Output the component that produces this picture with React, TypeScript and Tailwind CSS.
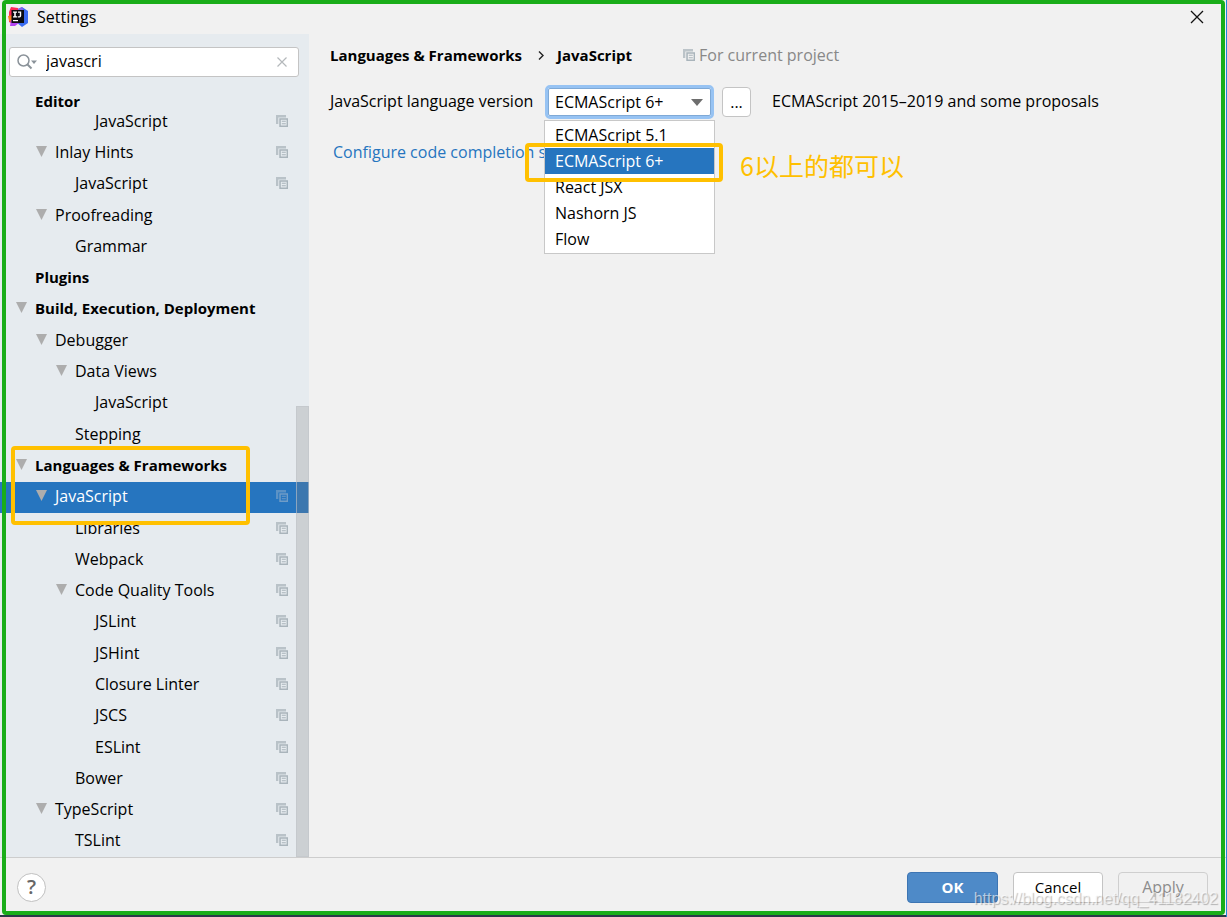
import React, { useState } from 'react';

interface TreeItem {
  id: string;
  label: string;
  level: number;
  open?: boolean;
  bold?: boolean;
  perProject?: boolean;
}

const treeItems: TreeItem[] = [
  { id: 'editor-js', label: 'JavaScript', level: 3, perProject: true },
  { id: 'inlay', label: 'Inlay Hints', level: 1, open: true, perProject: true },
  { id: 'inlay-js', label: 'JavaScript', level: 2, perProject: true },
  { id: 'proofreading', label: 'Proofreading', level: 1, open: true },
  { id: 'grammar', label: 'Grammar', level: 2 },
  { id: 'plugins', label: 'Plugins', level: 0, bold: true },
  { id: 'build', label: 'Build, Execution, Deployment', level: 0, open: true, bold: true },
  { id: 'debugger', label: 'Debugger', level: 1, open: true },
  { id: 'data-views', label: 'Data Views', level: 2, open: true },
  { id: 'data-views-js', label: 'JavaScript', level: 3 },
  { id: 'stepping', label: 'Stepping', level: 2 },
  { id: 'languages', label: 'Languages & Frameworks', level: 0, open: true, bold: true },
  { id: 'javascript', label: 'JavaScript', level: 1, open: true, perProject: true },
  { id: 'libraries', label: 'Libraries', level: 2, perProject: true },
  { id: 'webpack', label: 'Webpack', level: 2, perProject: true },
  { id: 'quality', label: 'Code Quality Tools', level: 2, open: true, perProject: true },
  { id: 'jslint', label: 'JSLint', level: 3, perProject: true },
  { id: 'jshint', label: 'JSHint', level: 3, perProject: true },
  { id: 'closure', label: 'Closure Linter', level: 3, perProject: true },
  { id: 'jscs', label: 'JSCS', level: 3, perProject: true },
  { id: 'eslint', label: 'ESLint', level: 3, perProject: true },
  { id: 'bower', label: 'Bower', level: 2, perProject: true },
  { id: 'typescript', label: 'TypeScript', level: 1, open: true, perProject: true },
  { id: 'tslint', label: 'TSLint', level: 2, perProject: true },
];

const versions = ['ECMAScript 5.1', 'ECMAScript 6+', 'React JSX', 'Nashorn JS', 'Flow'];

const levelPadding = ['pl-[15px]', 'pl-[35px]', 'pl-[55px]', 'pl-[75px]'];

const ProjectIcon = ({ className = 'text-[#a9b4bb]' }: { className?: string }) => (
  <svg width="12" height="12" viewBox="0 0 12 12" className={`shrink-0 ${className}`}>
    <path d="M0 0h10v2.500H2.300V9H0z" fill="currentColor" opacity=".75" />
    <path fillRule="evenodd" d="M3.300 3.300H12V12H3.300zM4.800 4.800v5.800h5.800V4.800z" fill="currentColor" />
    <path d="M5.800 5.800h4v1h-4zM5.800 8.200h4v1h-4z" fill="currentColor" />
  </svg>
);

const Logo = () => (
  <svg width="20" height="20" viewBox="0 0 20 20" className="shrink-0">
    <path d="M1 5 3 0l7 1 3 9-8 7-4-2z" fill="#fe2857" />
    <path d="M0 9l5-1v7l-4-1z" fill="#fc801d" />
    <path d="M10 2l4-2 6 4v12l-6 4-6-5z" fill="#3b6cf0" />
    <path d="M10 2l4-2 2 4h-6z" fill="#8a63e8" />
    <path d="M2 19l1-6 8 3-4 3z" fill="#b345f1" />
    <path d="M3.500 3h12.500v13H3.500z" fill="#0b0b0f" />
    <path d="M5 4.500h4v1.200H7.800v3.600H9v1.200H5V9.300h1.200V5.700H5zM10 4.500h3.200v4.300q0 1.700-1.700 1.700H9.700V9.300h1.500q.6 0 .6-.7V5.700H10z" fill="#fff" />
    <path d="M5 13h5v1.200H5z" fill="#fff" />
  </svg>
);

function App() {
  const [query, setQuery] = useState('javascri');
  const [selected, setSelected] = useState('javascript');
  const [version, setVersion] = useState('ECMAScript 6+');

  return (
    <div className="relative flex min-h-screen flex-col overflow-hidden bg-[#f1f1f1] font-['Open_Sans','Noto_Sans_CJK_SC',sans-serif] text-[16px] leading-5 text-black">
      <header className="flex h-[34px] items-center gap-[9px] pr-[23px] pl-2">
        <Logo />
        <h1 className="flex-1 text-[16px]">Settings</h1>
        <button type="button" aria-label="Close" className="p-0">
          <svg width="14" height="14" viewBox="0 0 14 14" fill="none" stroke="#111" strokeWidth="1.300">
            <path d="M1 1l12 12M13 1L1 13" />
          </svg>
        </button>
      </header>

      <div className="flex flex-1">
        <aside className="flex w-[309px] shrink-0 flex-col bg-[#e6ebef]">
          <div className="mx-[9px] mt-[13px] mr-[10px] flex h-[30px] items-center rounded-[3px] border border-[#c4c4c4] bg-white pr-[10px] pl-[7px]">
            <svg width="21" height="16" viewBox="0 0 21 16" fill="none" stroke="#8a9299" strokeWidth="1.500" className="shrink-0">
              <circle cx="6.500" cy="6.500" r="5.500" />
              <path d="M10.500 10.500l4 4" strokeWidth="2" />
              <path d="M14 6.500h6l-3 3.500z" fill="#8a9299" stroke="none" />
            </svg>
            <input
              aria-label="Search settings"
              value={query}
              onChange={(e) => setQuery(e.target.value)}
              className="ml-2 min-w-0 flex-1 bg-transparent pb-0.5 outline-none"
            />
            <button type="button" aria-label="Clear search" onClick={() => setQuery('')}>
              <svg width="12" height="12" viewBox="0 0 12 12" fill="none" stroke="#b4b8bb" strokeWidth="1.200">
                <path d="M1.500 1.500l9 9M10.500 1.500l-9 9" />
              </svg>
            </button>
          </div>

          <div className="mt-[14px] h-[15px] pl-[35px] text-[15px] font-bold">Editor</div>

          <ul className="relative flex flex-1 flex-col">
            {treeItems.map((item) => {
              const isSelected = item.id === selected;
              return (
                <li key={item.id} className="relative flex flex-1">
                  <button
                    type="button"
                    onClick={() => setSelected(item.id)}
                    className={`flex min-h-7 flex-1 items-center pr-[21px] pb-0.5 text-left ${levelPadding[item.level]} ${
                      isSelected ? 'bg-[#2675bf] text-white' : ''
                    } ${item.bold ? 'text-[15px] font-bold' : ''}`}
                  >
                    <span className="flex w-5 shrink-0">
                      {item.open && (
                        <svg width="13" height="12" viewBox="0 0 13 12" className="text-[#adadad]">
                          <path d="M1 0h11L6.500 11z" fill="currentColor" />
                        </svg>
                      )}
                    </span>
                    <span className="flex-1">{item.label}</span>
                    {item.perProject && <ProjectIcon className={isSelected ? 'text-[#6f9cc7]' : 'text-[#a9b4bb]'} />}
                  </button>
                  {item.id === 'languages' && (
                    <div className="pointer-events-none absolute -top-1 left-[11px] z-20 h-[79px] w-[239px] rounded-[4px] border-4 border-[#ffc000]" />
                  )}
                </li>
              );
            })}
            <li aria-hidden="true" className="absolute top-[40%] right-0 bottom-0 w-[13px] border border-[#bfc4c9]/60 bg-[#808080]/25" />
          </ul>
        </aside>

        <main className="min-w-0 flex-1 px-[21px] pt-[11px]">
          <div className="flex items-center">
            <h2 className="flex items-center text-[15px] font-bold">
              Languages &amp; Frameworks
              <svg width="7" height="11" viewBox="0 0 7 11" fill="none" stroke="#222" strokeWidth="1.400" className="mr-3 ml-4">
                <path d="M1 1.500l4 4-4 4" />
              </svg>
              JavaScript
            </h2>
            <span className="ml-[51px] flex items-center gap-1 text-[#888]">
              <ProjectIcon />
              For current project
            </span>
          </div>

          <div className="mt-5 flex items-center">
            <label htmlFor="language-version" className="w-[215px] pb-0.5">
              JavaScript language version
            </label>
            <div className="relative w-[169px]">
              <select
                id="language-version"
                value={version}
                onChange={(e) => setVersion(e.target.value)}
                className="block h-[34px] w-full appearance-none rounded-[5px] border-[3px] border-[#97c3f3] bg-white pl-[7px] outline-1 -outline-offset-4 outline-[#7fa9d6]"
              >
                {versions.map((name) => (
                  <option key={name}>{name}</option>
                ))}
              </select>
              <svg width="12" height="7" viewBox="0 0 12 7" className="pointer-events-none absolute top-[14px] right-[11px]">
                <path d="M0 0h12L6 7z" fill="#6e6e6e" />
              </svg>
              <ul
                role="listbox"
                aria-label="JavaScript language version"
                className="absolute top-[35px] -left-px z-10 w-[171px] border border-[#c8c8c8] bg-white py-px"
              >
                {versions.map((name) => (
                  <li
                    key={name}
                    role="option"
                    aria-selected={name === version}
                    onClick={() => setVersion(name)}
                    className={`flex h-[26px] items-center pl-[10px] ${name === version ? 'bg-[#2675bf] text-white' : ''}`}
                  >
                    {name}
                  </li>
                ))}
              </ul>
              <div className="pointer-events-none absolute top-[58px] -left-[20px] z-20 h-[39px] w-[198px] rounded-[4px] border-4 border-[#ffc000]" />
              <p className="absolute top-[62px] left-[195px] font-['Noto_Sans_CJK_SC',sans-serif] text-[25px] leading-9 whitespace-nowrap text-[#ffc000]">
                6以上的都可以
              </p>
            </div>
            <button type="button" className="ml-2 h-[30px] w-[29px] rounded-[4px] border border-[#c4c4c4] bg-white">
              ...
            </button>
            <span className="ml-[21px] pb-0.5">ECMAScript 2015–2019 and some proposals</span>
          </div>

          <a href="#completion" className="mt-[23px] ml-[3px] block text-[#2675bf]">
            Configure code completion s
          </a>
        </main>
      </div>

      <footer className="flex h-[60px] items-center border-t border-[#cdcdcd] pr-[19px] pb-px pl-[17px]">
        <button
          type="button"
          aria-label="Help"
          className="h-[29px] w-[29px] rounded-full border border-[#c0c0c0] bg-white text-[20px] leading-6 font-semibold text-[#666]"
        >
          ?
        </button>
        <div className="ml-auto flex gap-[15px]">
          <button type="button" className="h-[31px] w-[91px] rounded-[4px] border border-[#3d75b3] bg-[#4e8ac8] text-[15px] font-bold text-white">
            OK
          </button>
          <button type="button" className="h-[31px] w-[90px] rounded-[4px] border border-[#c4c4c4] bg-white text-[15px]">
            Cancel
          </button>
          <button type="button" disabled className="h-[31px] w-[90px] rounded-[4px] border border-[#cfcfcf] text-[#8c8c8c]">
            Apply
          </button>
        </div>
      </footer>

      {/* window frame and watermark lie over the whole dialog */}
      <div className="pointer-events-none absolute inset-x-0 bottom-0 h-0.5 bg-[#2b3a48]" />
      <div className="pointer-events-none absolute inset-y-0 right-0 w-px bg-[#1e88d8]" />
      <div className="pointer-events-none absolute top-0 right-0.5 bottom-0.5 left-0.5 z-30 rounded-[4px] border-4 border-[#1aad19]" />
      <div className="pointer-events-none absolute right-[9px] bottom-2 z-30 font-['Liberation_Sans',sans-serif] text-[16px] text-white/60 [text-shadow:1px_1px_1px_#0004]">
        https://blog.csdn.net/qq_41182402
      </div>
    </div>
  );
}

export default App;
